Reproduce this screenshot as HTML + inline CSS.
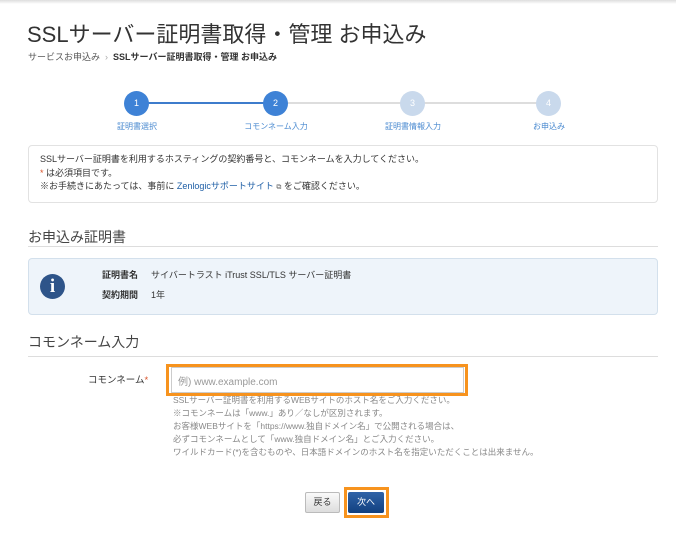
<!DOCTYPE html>
<html><head><meta charset="utf-8"><style>
*{margin:0;padding:0;box-sizing:border-box}
body{width:676px;height:533px;background:#fff;position:relative;overflow:hidden;font-family:"Liberation Sans","Noto Sans CJK JP",sans-serif;color:#333}
.a{position:absolute;white-space:nowrap}
.topsh{position:absolute;left:0;top:0;width:676px;height:4px;background:linear-gradient(#ddd,#fff)}
.c{position:absolute;width:25px;height:25px;border-radius:50%;color:#fff;font-size:9px;text-align:center;line-height:25px}
.lbl{position:absolute;font-size:8px;color:#4a8ad0;transform:translateX(-50%);white-space:nowrap}
.box{position:absolute;border:1px solid #e2e2e2;border-radius:4px}
</style></head><body>
<div class="topsh"></div>
<div class="a" style="left:27px;top:17px;font-size:22px;color:#333">SSLサーバー証明書取得・管理 お申込み</div>
<div class="a" style="left:28px;top:50px;font-size:9px;color:#555">サービスお申込み &nbsp;<span style="color:#aaa">›</span>&nbsp; <b style="color:#333">SSLサーバー証明書取得・管理 お申込み</b></div>
<div class="a" style="left:137px;top:102px;width:139px;height:2px;background:#3d7ccc"></div>
<div class="a" style="left:276px;top:102px;width:273px;height:2px;background:#ddd"></div>
<div class="c" style="left:124px;top:91px;background:#3e82d6">1</div>
<div class="c" style="left:263px;top:91px;background:#3e82d6">2</div>
<div class="c" style="left:400px;top:91px;background:#c9d9ec">3</div>
<div class="c" style="left:536px;top:91px;background:#c9d9ec">4</div>
<div class="lbl" style="left:137px;top:121px">証明書選択</div>
<div class="lbl" style="left:276px;top:121px">コモンネーム入力</div>
<div class="lbl" style="left:413px;top:121px">証明書情報入力</div>
<div class="lbl" style="left:549px;top:121px">お申込み</div>
<div class="box" style="left:28px;top:145px;width:630px;height:58px"></div>
<div class="a" style="left:40px;top:153px;font-size:9px;line-height:13.5px;color:#333">SSLサーバー証明書を利用するホスティングの契約番号と、コモンネームを入力してください。<br><span style="color:#d9532a">*</span> は必須項目です。<br>※お手続きにあたっては、事前に <span style="color:#1f5fa6">Zenlogicサポートサイト</span> <span style="font-size:7px;color:#666">⧉</span> をご確認ください。</div>
<div class="a" style="left:28px;top:227px;font-size:14px;color:#444">お申込み証明書</div>
<div class="a" style="left:28px;top:246px;width:630px;height:1px;background:#ddd"></div>
<div class="box" style="left:28px;top:258px;width:630px;height:57px;background:#eef4fa;border-color:#d3e0ec"></div>
<div class="a" style="left:40px;top:274px;width:25px;height:25px;border-radius:50%;background:#2e5489;color:#fff;font-weight:bold;font-family:'Liberation Serif',serif;font-size:19px;text-align:center;line-height:25px">i</div>
<div class="a" style="left:102px;top:268px;font-size:9px;font-weight:bold;color:#333">証明書名</div>
<div class="a" style="left:151px;top:268px;font-size:9px;color:#333">サイバートラスト iTrust SSL/TLS サーバー証明書</div>
<div class="a" style="left:102px;top:288px;font-size:9px;font-weight:bold;color:#333">契約期間</div>
<div class="a" style="left:151px;top:288px;font-size:9px;color:#333">1年</div>
<div class="a" style="left:28px;top:332px;font-size:14px;color:#444">コモンネーム入力</div>
<div class="a" style="left:28px;top:356px;width:630px;height:1px;background:#ddd"></div>
<div class="a" style="left:88px;top:372px;font-size:9.5px;color:#333">コモンネーム<span style="color:#d9532a">*</span></div>
<div class="a" style="left:166px;top:364px;width:302px;height:32px;border:3px solid #f7931e"></div>
<div class="a" style="left:171px;top:367px;width:293px;height:26px;border:1px solid #ccc;font-size:10px;color:#999;padding:5px 6px">例) www.example.com</div>
<div class="a" style="left:173px;top:394px;font-size:8.5px;line-height:13px;color:#888">SSLサーバー証明書を利用するWEBサイトのホスト名をご入力ください。<br>※コモンネームは「www.」あり／なしが区別されます。<br>お客様WEBサイトを「https://www.独自ドメイン名」で公開される場合は、<br>必ずコモンネームとして「www.独自ドメイン名」とご入力ください。<br>ワイルドカード(*)を含むものや、日本語ドメインのホスト名を指定いただくことは出来ません。</div>
<div class="a" style="left:305px;top:492px;width:35px;height:21px;border:1px solid #bbb;border-radius:2px;background:linear-gradient(#fafafa,#ddd);font-size:9px;text-align:center;line-height:19px;color:#333">戻る</div>
<div class="a" style="left:344px;top:487px;width:45px;height:31px;border:3px solid #f7931e"></div>
<div class="a" style="left:348px;top:492px;width:36px;height:21px;border-radius:2px;background:linear-gradient(#2f63a8,#12407f);font-size:9px;text-align:center;line-height:21px;color:#fff">次へ</div>
</body></html>
